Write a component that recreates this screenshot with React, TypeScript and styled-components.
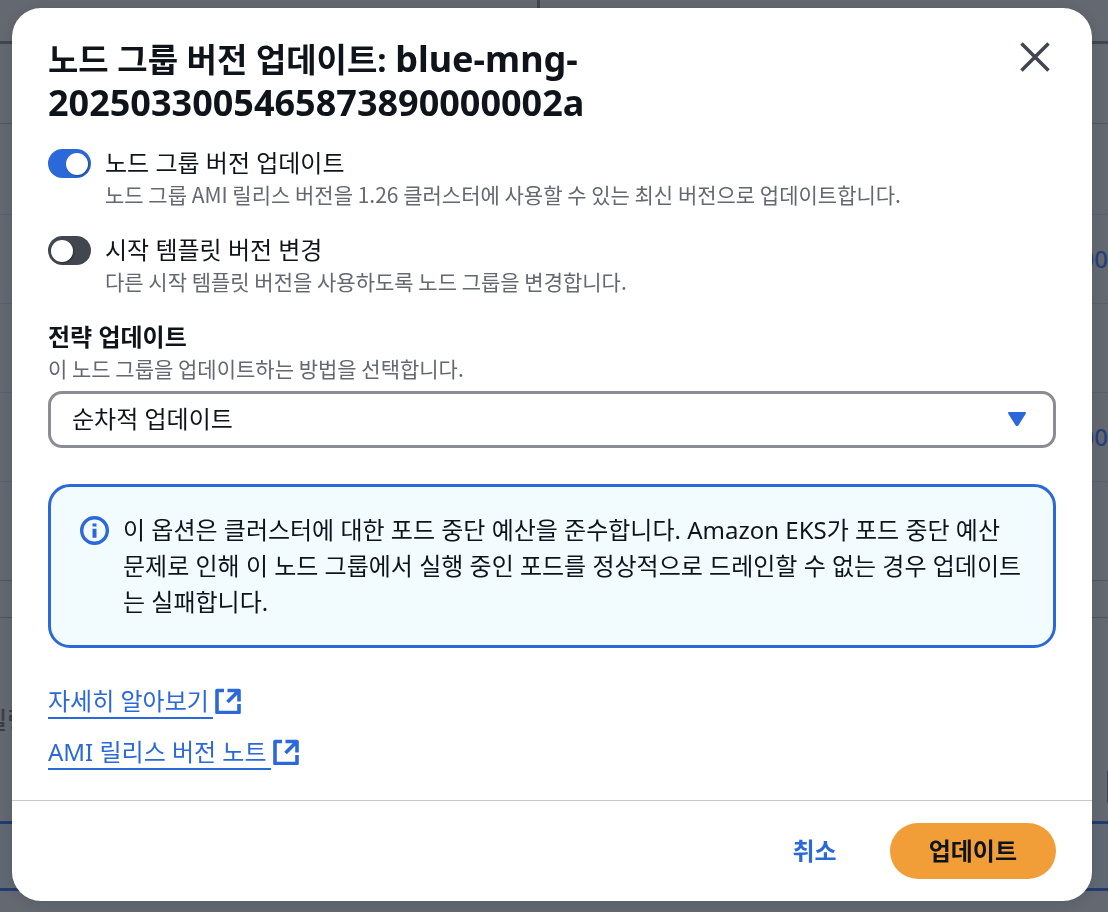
import React, { useState } from "react";
import styled, { createGlobalStyle } from "styled-components";

const fonts = '"Noto Sans", "Noto Sans CJK KR", sans-serif';
const koreanFonts = '"Noto Sans CJK KR", sans-serif';

const GlobalStyle = createGlobalStyle`
  *, *::before, *::after { box-sizing: border-box; }
  html, body { margin: 0; min-height: 100%; }
  body {
    background: #646871;
    color: #0f141a;
    font-family: ${fonts};
    font-size: 24px;
    line-height: 36px;
  }
  h2, h3, p { margin: 0; }
`;

/* Dimmed console page behind the dialog */
const Page = styled.div`
  position: fixed;
  inset: 0;
  overflow: hidden;
  background: #646871;
`;

const PageHeader = styled.div`
  height: 44px;
  display: grid;
  grid-template-columns: 540px 1fr;
  border-bottom: 3px solid #424650;
`;

const PageHeaderCell = styled.div`
  border-right: 3px solid #424650;
`;

const PageRow = styled.div<{ $height: number; $strong?: boolean }>`
  height: ${(p) => p.$height}px;
  display: flex;
  align-items: center;
  justify-content: flex-end;
  border-bottom: 1px solid ${(p) => (p.$strong ? "#50545f" : "#5a5f70")};
  color: #263f78;
  font-weight: 500;
  white-space: nowrap;
`;

const PageSection = styled.div`
  height: 203px;
  display: flex;
  align-items: center;
  justify-content: space-between;
  color: #3a3e48;
`;

const SectionLabel = styled.span`
  margin-left: -15px;
  font-weight: 500;
`;

const SectionEdge = styled.span`
  align-self: flex-end;
  width: 1px;
  height: 32px;
  margin-bottom: 18px;
  background: #424650;
`;

const PageSelected = styled.div`
  height: 70px;
  border: solid #233b70;
  border-width: 3px 0;
  background: #606973;
`;

const Overlay = styled.div`
  position: relative;
  padding: 8px 16px 11px 12px;
`;

const Dialog = styled.section`
  border-radius: 29px;
  background: #ffffff;
  box-shadow: 0 2px 14px rgba(15, 20, 26, 0.12);
`;

const Header = styled.header`
  display: flex;
  align-items: flex-start;
  justify-content: space-between;
  padding: 29px 36px 0;
`;

const Title = styled.h2`
  max-width: 720px;
  font-size: 33px;
  line-height: 43px;
  font-weight: 700;
`;

const GroupName = styled.span`
  font-size: 36px;
`;

const CloseButton = styled.button`
  display: flex;
  padding: 4px 5px;
  border: 0;
  background: none;
  color: #424650;
  cursor: pointer;
`;

const Body = styled.div`
  padding: 20px 36px 30px;
`;

const ToggleField = styled.label`
  display: flex;
  gap: 14px;
  margin-bottom: 25px;
  cursor: pointer;
`;

const Switch = styled.input`
  appearance: none;
  flex: none;
  display: flex;
  align-items: center;
  width: 43px;
  height: 29px;
  margin: 4px 0 0;
  padding: 0 3px;
  border-radius: 15px;
  background: #424650;
  cursor: pointer;

  &::before {
    content: "";
    width: 22px;
    height: 22px;
    border-radius: 50%;
    background: #ffffff;
    box-shadow: 1px 1px 2px rgba(0, 0, 0, 0.35);
  }

  &:checked {
    justify-content: flex-end;
    background: #2b68d9;
  }
`;

const FieldText = styled.span`
  display: flex;
  flex-direction: column;
`;

const FieldLabel = styled.span`
  line-height: 36px;
`;

const Description = styled.span`
  display: block;
  font-family: ${koreanFonts};
  font-size: 21px;
  line-height: 26px;
  color: #656871;
`;

const SelectLabel = styled.label`
  display: block;
  font-weight: 700;
  line-height: 36px;
`;

const SelectBox = styled.div`
  display: grid;
  align-items: center;
  margin-top: 10px;

  > * {
    grid-area: 1 / 1;
  }

  > svg {
    justify-self: end;
    margin: 0 29px 2px 0;
    pointer-events: none;
  }
`;

const Select = styled.select`
  appearance: none;
  width: 100%;
  height: 57px;
  padding: 0 60px 2px 21px;
  border: 3px solid #8c8c94;
  border-radius: 14px;
  background: #ffffff;
  color: #0f141a;
  font: inherit;
`;

const Alert = styled.div`
  display: flex;
  gap: 13px;
  margin-top: 36px;
  padding: 25px 29px;
  border: 3px solid #2b68d9;
  border-radius: 22px;
  background: #f2fcff;

  > svg {
    flex: none;
    margin-top: 4px;
  }
`;

const Links = styled.div`
  display: flex;
  flex-direction: column;
  align-items: flex-start;
  gap: 15px;
  margin-top: 35px;
`;

const Link = styled.a`
  display: flex;
  align-items: center;
  gap: 2px;
  color: #2b68d9;
  text-decoration: none;
`;

const LinkText = styled.span`
  height: 36px;
  padding-right: 4px;
  border-bottom: 2px solid #2b68d9;
`;

const Footer = styled.footer`
  display: flex;
  justify-content: flex-end;
  gap: 14px;
  padding: 22px 36px;
  border-top: 1px solid #c6c6cd;
`;

const Button = styled.button<{ $primary?: boolean }>`
  height: 56px;
  padding: 0 39px;
  border: 0;
  border-radius: 28px;
  background: ${(p) => (p.$primary ? "#f19e38" : "transparent")};
  color: ${(p) => (p.$primary ? "#0f141a" : "#2b68d9")};
  font: inherit;
  font-weight: 700;
  cursor: pointer;
`;

const CloseIcon = () => (
  <svg width="32" height="32" viewBox="0 0 32 32" fill="none" stroke="currentColor" strokeWidth="3.6" aria-hidden="true">
    <path d="M2.5 2.5 29.5 29.5M29.5 2.5 2.5 29.5" />
  </svg>
);

const CaretIcon = () => (
  <svg width="20" height="16" viewBox="0 0 20 16" fill="#2b68d9" stroke="#2b68d9" strokeWidth="2" strokeLinejoin="round" aria-hidden="true">
    <path d="M2 2H18L10.5 14H9.5Z" />
  </svg>
);

const InfoIcon = () => (
  <svg width="30" height="30" viewBox="0 0 30 30" fill="none" aria-hidden="true">
    <circle cx="14.5" cy="14.5" r="12.8" stroke="#2b68d9" strokeWidth="3.4" />
    <path d="M12.5 7.5h4v3h-4zM12.5 12.7h4v9h-4z" fill="#2b68d9" />
  </svg>
);

const ExternalIcon = () => (
  <svg width="26" height="26" viewBox="0 0 26 26" fill="none" stroke="#2b68d9" strokeWidth="3.6" strokeLinejoin="round" aria-hidden="true">
    <path d="M9 2.5H2v22h22v-8.5" />
    <path d="M12.5 2.5h11.5v11M24 2.5 12.5 14" />
  </svg>
);

interface ToggleProps {
  label: string;
  description: string;
  initial: boolean;
}

function Toggle({ label, description, initial }: ToggleProps) {
  const [on, setOn] = useState(initial);
  return (
    <ToggleField>
      <Switch type="checkbox" role="switch" checked={on} onChange={() => setOn(!on)} />
      <FieldText>
        <FieldLabel>{label}</FieldLabel>
        <Description>{description}</Description>
      </FieldText>
    </ToggleField>
  );
}

export default function App() {
  return (
    <>
      <GlobalStyle />
      <Page aria-hidden="true">
        <PageHeader>
          <PageHeaderCell />
        </PageHeader>
        <PageRow $height={80} $strong />
        <PageRow $height={91} />
        <PageRow $height={89}>00</PageRow>
        <PageRow $height={89} />
        <PageRow $height={89}>00</PageRow>
        <PageRow $height={99} $strong />
        <PageRow $height={37} $strong />
        <PageSection>
          <SectionLabel>릴링</SectionLabel>
          <SectionEdge />
        </PageSection>
        <PageSelected />
      </Page>
      <Overlay>
        <Dialog role="dialog" aria-modal="true" aria-labelledby="dialog-title">
          <Header>
            <Title id="dialog-title">
              노드 그룹 버전 업데이트: <GroupName>blue-mng-2025033005465873890000002a</GroupName>
            </Title>
            <CloseButton type="button" aria-label="닫기">
              <CloseIcon />
            </CloseButton>
          </Header>
          <Body>
            <Toggle
              initial={true}
              label="노드 그룹 버전 업데이트"
              description="노드 그룹 AMI 릴리스 버전을 1.26 클러스터에 사용할 수 있는 최신 버전으로 업데이트합니다."
            />
            <Toggle
              initial={false}
              label="시작 템플릿 버전 변경"
              description="다른 시작 템플릿 버전을 사용하도록 노드 그룹을 변경합니다."
            />
            <SelectLabel htmlFor="strategy">전략 업데이트</SelectLabel>
            <Description id="strategy-hint">이 노드 그룹을 업데이트하는 방법을 선택합니다.</Description>
            <SelectBox>
              <Select id="strategy" aria-describedby="strategy-hint" defaultValue="rolling">
                <option value="rolling">순차적 업데이트</option>
              </Select>
              <CaretIcon />
            </SelectBox>
            <Alert>
              <InfoIcon />
              <p>
                이 옵션은 클러스터에 대한 포드 중단 예산을 준수합니다. Amazon EKS가 포드 중단 예산
                문제로 인해 이 노드 그룹에서 실행 중인 포드를 정상적으로 드레인할 수 없는 경우 업데이트는
                실패합니다.
              </p>
            </Alert>
            <Links>
              <Link href="#learn-more">
                <LinkText>자세히 알아보기</LinkText>
                <ExternalIcon />
              </Link>
              <Link href="#release-notes">
                <LinkText>AMI 릴리스 버전 노트</LinkText>
                <ExternalIcon />
              </Link>
            </Links>
          </Body>
          <Footer>
            <Button type="button">취소</Button>
            <Button type="button" $primary>
              업데이트
            </Button>
          </Footer>
        </Dialog>
      </Overlay>
    </>
  );
}
